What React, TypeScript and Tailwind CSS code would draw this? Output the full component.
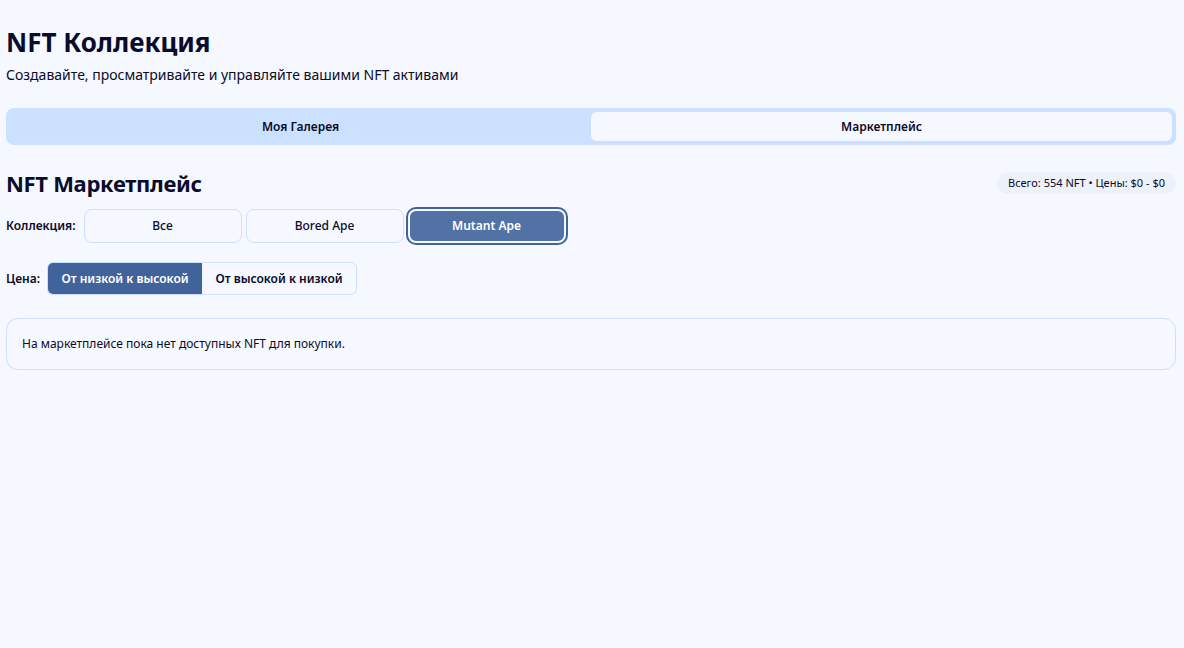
import React from "react";

export default function App() {
  const font = { fontFamily: '"Noto Sans", "Open Sans", sans-serif' };
  return (
    <div className="min-h-[648px] w-full bg-[#f5f8ff] text-[#0b0b2a] pl-[6px] pr-[8px] pt-[24px]" style={font}>
      <h1 className="text-[26px] font-bold leading-[36px]">NFT Коллекция</h1>
      <p className="text-[14px] leading-[20px] mt-[5px]">
        Создавайте, просматривайте и управляйте вашими NFT активами
      </p>

      <div className="mt-[23px] flex h-[37px] rounded-[8px] bg-[#cce0ff] p-[4px]">
        <button className="flex-1 rounded-[6px] text-[12px] font-semibold">Моя Галерея</button>
        <button className="flex-1 rounded-[6px] bg-[#f5f8ff] text-[12px] font-semibold">Маркетплейс</button>
      </div>

      <div className="mt-[23px] flex items-center justify-between">
        <h2 className="text-[22px] font-bold leading-[30px] tracking-[-0.3px]">NFT Маркетплейс</h2>
        <span className="rounded-full bg-[#edf1f8] px-[11px] py-[3px] text-[11px] leading-[16px]">
          Всего: 554 NFT • Цены: $0 - $0
        </span>
      </div>

      <div className="mt-[11px] flex items-center">
        <span className="text-[12px] font-semibold mr-[8px]">Коллекция:</span>
        <div className="flex gap-[4px]">
          <button className="h-[34px] w-[158px] rounded-[8px] border border-[#cce0ff] text-[12px] font-medium">Все</button>
          <button className="h-[34px] w-[158px] rounded-[8px] border border-[#cce0ff] text-[12px] font-medium">Bored Ape</button>
          <button className="h-[34px] w-[158px] rounded-[8px] border-2 border-[#f5f8ff] bg-[#5272a6] text-[12px] font-semibold text-white ring-2 ring-[#41639b]">
            Mutant Ape
          </button>
        </div>
      </div>

      <div className="mt-[19px] flex items-center">
        <span className="text-[12px] font-semibold mr-[7px]">Цена:</span>
        <div className="flex h-[33px] rounded-[6px] border border-[#cce0ff] overflow-hidden">
          <button className="h-full w-[154px] bg-[#41639b] text-[12px] font-semibold text-white">От низкой к высокой</button>
          <button className="h-full w-[154px] text-[12px] font-semibold">От высокой к низкой</button>
        </div>
      </div>

      <div className="mt-[23px] rounded-[12px] border border-[#cce0ff] px-[15px] py-[15px] text-[12px] leading-[20px]">
        На маркетплейсе пока нет доступных NFT для покупки.
      </div>
    </div>
  );
}
